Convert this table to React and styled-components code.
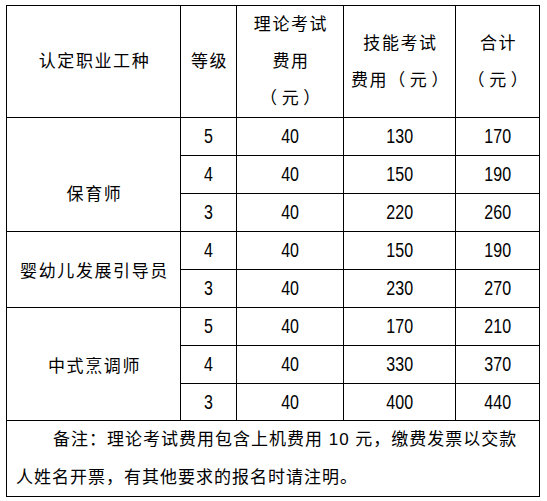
import React from "react";
import styled, { createGlobalStyle } from "styled-components";

const GlobalStyle = createGlobalStyle`
  html, body {
    margin: 0;
    padding: 0;
    background: #fff;
  }
  body {
    font-family: "Liberation Sans", "Noto Sans CJK SC", sans-serif;
    color: #000;
  }
`;

const FEES = [
  {
    name: "保育师",
    offset: 36,
    levels: [
      { level: 5, theory: 40, skill: 130, total: 170 },
      { level: 4, theory: 40, skill: 150, total: 190 },
      { level: 3, theory: 40, skill: 220, total: 260 },
    ],
  },
  {
    name: "婴幼儿发展引导员",
    offset: 0,
    levels: [
      { level: 4, theory: 40, skill: 150, total: 190 },
      { level: 3, theory: 40, skill: 230, total: 270 },
    ],
  },
  {
    name: "中式烹调师",
    offset: 0,
    levels: [
      { level: 5, theory: 40, skill: 170, total: 210 },
      { level: 4, theory: 40, skill: 330, total: 370 },
      { level: 3, theory: 40, skill: 400, total: 440 },
    ],
  },
];

const Page = styled.div`
  padding: 5px 0 0 6px;
`;

const Table = styled.table`
  border-collapse: collapse;
  table-layout: fixed;
  width: 534px;
`;

const HeadCell = styled.th`
  border: 1px solid #000;
  height: 111px;
  padding: 0 0 0 2px;
  font-weight: 400;
  font-size: 17px;
  letter-spacing: 1.6px;
  line-height: 37px;
  text-align: center;
  vertical-align: middle;
`;

// the unit inside full-width brackets sits a little apart from them
const Unit = styled.span`
  margin: 0 3px;
`;

const NameCell = styled.td`
  border: 1px solid #000;
  padding: ${(p) => p.$offset || 0}px 0 0 2px;
  font-size: 17px;
  letter-spacing: 1.6px;
  text-align: center;
  vertical-align: middle;
`;

const NumCell = styled.td`
  border: 1px solid #000;
  height: ${(p) => p.$h || 37}px;
  padding: 0;
  text-align: center;
  vertical-align: middle;
`;

const Num = styled.span`
  display: inline-block;
  font-size: 20px;
  line-height: 20px;
  transform: scaleX(0.8);
`;

const NoteCell = styled.td`
  border: 1px solid #000;
  height: 74px;
  padding: 0 0 0 9px;
  font-size: 17px;
  letter-spacing: 1px;
  line-height: 37.5px;
  text-align: left;
  vertical-align: middle;
  white-space: nowrap;
`;

const NoteLine = styled.div`
  text-indent: ${(p) => (p.$first ? 37 : 0)}px;
`;

export default function App() {
  return (
    <>
      <GlobalStyle />
      <Page>
        <Table>
          <colgroup>
            <col style={{ width: 174 }} />
            <col style={{ width: 56 }} />
            <col style={{ width: 107 }} />
            <col style={{ width: 112 }} />
            <col style={{ width: 84 }} />
          </colgroup>
          <thead>
            <tr>
              <HeadCell>认定职业工种</HeadCell>
              <HeadCell>等级</HeadCell>
              <HeadCell>
                理论考试
                <br />
                费用
                <br />
                （<Unit>元</Unit>）
              </HeadCell>
              <HeadCell>
                技能考试
                <br />
                费用（<Unit>元</Unit>）
              </HeadCell>
              <HeadCell>
                合计
                <br />
                （<Unit>元</Unit>）
              </HeadCell>
            </tr>
          </thead>
          <tbody>
            {FEES.map((job, gi) =>
              job.levels.map((row, i) => {
                const last = gi === FEES.length - 1 && i === job.levels.length - 1;
                const h = last ? 36 : 37;
                return (
                  <tr key={`${job.name}-${row.level}`}>
                    {i === 0 && (
                      <NameCell rowSpan={job.levels.length} $offset={job.offset}>
                        {job.name}
                      </NameCell>
                    )}
                    <NumCell $h={h}><Num>{row.level}</Num></NumCell>
                    <NumCell $h={h}><Num>{row.theory}</Num></NumCell>
                    <NumCell $h={h}><Num>{row.skill}</Num></NumCell>
                    <NumCell $h={h}><Num>{row.total}</Num></NumCell>
                  </tr>
                );
              })
            )}
            <tr>
              <NoteCell colSpan={5}>
                <NoteLine $first>备注：理论考试费用包含上机费用 10 元，缴费发票以交款</NoteLine>
                <NoteLine>人姓名开票，有其他要求的报名时请注明。</NoteLine>
              </NoteCell>
            </tr>
          </tbody>
        </Table>
      </Page>
    </>
  );
}
